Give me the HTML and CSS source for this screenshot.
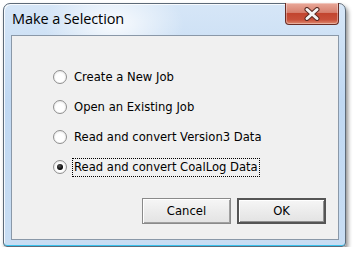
FILE: index.html
```html
<!DOCTYPE html>
<html lang="en">
<head>
  <meta charset="UTF-8">
  <title>Make a Selection</title>
  <link rel="stylesheet" href="styles.css">
</head>
<body>
  <div class="window">
    <div class="titlebar">
      <span class="title">Make a Selection</span>
      <button class="close" type="button" aria-label="Close">
        <svg width="20" height="14" viewBox="0 0 20 14">
          <path d="M5 2.5 L15 11.5 M15 2.5 L5 11.5" stroke="#5a2a22" stroke-width="5" stroke-linecap="round"/>
          <path d="M5 2.5 L15 11.5 M15 2.5 L5 11.5" stroke="#f4f4f4" stroke-width="3" stroke-linecap="round"/>
        </svg>
      </button>
    </div>
    <div class="client">
      <div class="options">
        <label class="option"><span class="radio"></span><span class="text">Create a New Job</span></label>
        <label class="option"><span class="radio"></span><span class="text">Open an Existing Job</span></label>
        <label class="option"><span class="radio"></span><span class="text">Read and convert Version3 Data</span></label>
        <label class="option selected"><span class="radio"></span><span class="text focus">Read and convert CoalLog Data</span></label>
      </div>
      <div class="buttons">
        <button class="btn" type="button">Cancel</button>
        <button class="btn default" type="button">OK</button>
      </div>
    </div>
  </div>
</body>
</html>
```

FILE: styles.css
```css
/* Dialog en estilo Vista */
body {
  margin: 0;
  background: #fff;
  font-family: "DejaVu Sans", sans-serif;
}
.window {
  margin: 3px 0 0 3px;
  width: 343px;
  height: 244px;
  box-sizing: border-box;
  border: 1px solid #5d6a78;
  border-radius: 7px 7px 4px 4px;
  padding: 0 6px 6px 7px;
  background:
    radial-gradient(ellipse 70px 40px at 110px 20px, rgba(255,255,255,0.85), rgba(255,255,255,0) 100%),
    linear-gradient(#d6e6f7, #c0d8f2 40%, #c8ddf3);
  box-shadow: inset 0 -1px 0 #39c3ee, inset 1px 1px 0 rgba(255,255,255,0.8), 2px 3px 4px rgba(0,0,0,0.45);
  display: flex;
  flex-direction: column;
}
.titlebar {
  height: 31px;
  display: flex;
  justify-content: space-between;
  align-items: flex-start;
}
.title {
  font-family: "Open Sans", sans-serif;
  font-size: 14.5px;
  color: #000;
  margin: 5px 0 0 1px;
  letter-spacing: -0.1px;
}
.close {
  margin-top: -1px;
  width: 54px;
  height: 22px;
  border: 1px solid #6a2c24;
  border-top: none;
  border-radius: 0 0 4px 4px;
  background: linear-gradient(#e9a99a, #d7806f 45%, #c2452f 50%, #c8503a 80%, #de8a70);
  box-shadow: inset 0 0 0 1px rgba(255,255,255,0.35);
  padding: 0;
  display: flex;
  align-items: center;
  justify-content: center;
}
.client {
  flex: 1;
  background: #f0f0f0;
  border: 1px solid #8a98a8;
  display: flex;
  flex-direction: column;
}
.options {
  padding: 26px 0 0 41px;
  display: flex;
  flex-direction: column;
}
.option {
  height: 30px;
  display: flex;
  align-items: center;
  font-size: 11.6px;
  color: #000;
}
.radio {
  width: 12px;
  height: 12px;
  border: 1px solid #8f8f8f;
  border-radius: 50%;
  background: radial-gradient(circle at 50% 55%, #fff 45%, #e6e6e6 80%, #cfcfcf);
  margin-right: 6px;
  display: flex;
  align-items: center;
  justify-content: center;
}
.selected .radio::after {
  content: "";
  width: 6px;
  height: 6px;
  border-radius: 50%;
  background: radial-gradient(circle at 40% 35%, #555, #000 70%);
}
.text {
  padding: 1px 1px 2px 1px;
  border: 1px solid transparent;
  margin-left: -1px;
}
.focus {
  border: 1px dotted #000;
}
.buttons {
  margin-top: auto;
  padding: 0 12px 15px 0;
  display: flex;
  justify-content: flex-end;
  gap: 6px;
}
.btn {
  width: 89px;
  height: 26px;
  font-family: "DejaVu Sans", sans-serif;
  font-size: 11.6px;
  color: #000;
  background: linear-gradient(#f6f6f6, #ececec 50%, #e3e3e3);
  border: 1px solid #8a8a8a;
  border-radius: 0;
  box-shadow: inset 1px 1px 0 #fff, inset -1px -1px 0 #a0a0a0;
  padding: 0;
}
.default {
  border: 2px solid #555;
  box-shadow: inset 1px 1px 0 #fff, inset -1px -1px 0 #909090;
}
```
